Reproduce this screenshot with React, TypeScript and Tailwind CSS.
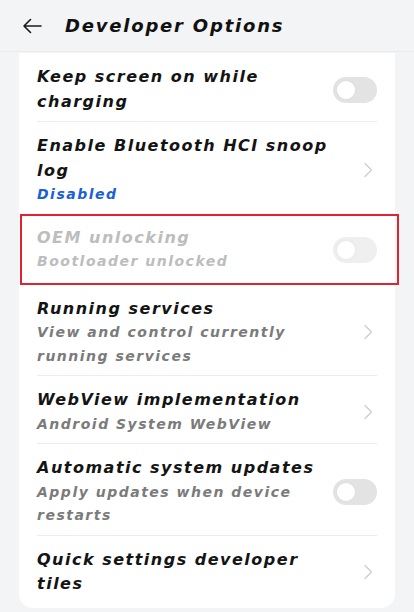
import React from "react";

const font = { fontFamily: '"DejaVu Sans", "Liberation Sans", sans-serif' };

function Toggle({ faded }: { faded?: boolean }) {
  return (
    <div className={`relative h-[26px] w-[44px] shrink-0 rounded-full ${faded ? "bg-[#efefef]" : "bg-[#e3e3e3]"}`}>
      <div className={`absolute left-[2px] top-[2px] h-[22px] w-[22px] rounded-full border-2 bg-white ${faded ? "border-[#ececec]" : "border-[#e1e1e1]"}`} />
    </div>
  );
}

function Chevron() {
  return (
    <svg width="10" height="16" viewBox="0 0 10 16" className="mr-[4px] shrink-0">
      <path d="M2 1.5 L8.5 8 L2 14.5" fill="none" stroke="#cfcfcf" strokeWidth="1.4" strokeLinecap="round" strokeLinejoin="round" />
    </svg>
  );
}

const titleCls = "whitespace-nowrap text-[16px] font-bold italic leading-[24.5px] tracking-[1.5px]";
const subCls = "whitespace-nowrap text-[14px] font-bold italic leading-[23.5px] tracking-[1.5px]";

type RowProps = {
  title: string[];
  sub?: string[];
  subColor?: string;
  titleColor?: string;
  right: React.ReactNode;
  divider?: boolean;
};

function Row({ title, sub, subColor = "text-[#7b7b7b]", titleColor = "text-[#141414]", right, divider = true }: RowProps) {
  return (
    <div className={`flex items-center justify-between pt-3 pb-[7px] ${divider ? "border-b border-[#ededed]" : ""}`}>
      <div className="flex flex-col">
        {title.map((t) => (
          <div key={t} className={`${titleCls} ${titleColor}`}>{t}</div>
        ))}
        {sub && sub.map((s) => (
          <div key={s} className={`${subCls} ${subColor}`}>{s}</div>
        ))}
      </div>
      <div className="flex items-center">{right}</div>
    </div>
  );
}

export default function App() {
  return (
    <div className="min-h-[612px] w-[414px] bg-[#f3f4f6]" style={font}>
      <div className="flex h-[52px] items-center border-b border-[#ebebeb] pl-[22px]">
        <svg width="20" height="16" viewBox="0 0 20 16">
          <path d="M19 8 H2 M8.5 1.5 L2 8 L8.5 14.5" fill="none" stroke="#1a1a1a" strokeWidth="1.6" strokeLinecap="round" strokeLinejoin="round" />
        </svg>
        <div className="ml-[23px] whitespace-nowrap text-[18px] font-bold italic tracking-[1.8px] text-[#111]">Developer Options</div>
      </div>
      <div className="mx-[19px] mt-[1px] rounded-b-[14px] bg-white pb-[4px]">
        <div className="px-[18px]">
          <Row title={["Keep screen on while", "charging"]} right={<Toggle />} />
          <Row
            title={["Enable Bluetooth HCI snoop", "log"]}
            sub={["Disabled"]}
            subColor="text-[#1b5fd8]"
            right={<Chevron />}
            divider={false}
          />
        </div>
        <div className="-mr-[4px] ml-[1px] border-2 border-[#dd2430] pl-[15px] pr-[20px]">
          <div className="flex items-center justify-between pt-[10px] pb-[9px]">
            <div className="flex flex-col">
              <div className={`${titleCls} text-[#bdbdbd]`}>OEM unlocking</div>
              <div className={`${subCls} text-[#bdbdbd]`}>Bootloader unlocked</div>
            </div>
            <Toggle faded />
          </div>
        </div>
        <div className="px-[18px]">
          <Row
            title={["Running services"]}
            sub={["View and control currently", "running services"]}
            right={<Chevron />}
          />
          <Row title={["WebView implementation"]} sub={["Android System WebView"]} right={<Chevron />} />
          <Row
            title={["Automatic system updates"]}
            sub={["Apply updates when device", "restarts"]}
            right={<Toggle />}
          />
          <Row title={["Quick settings developer", "tiles"]} right={<Chevron />} divider={false} />
        </div>
      </div>
    </div>
  );
}
